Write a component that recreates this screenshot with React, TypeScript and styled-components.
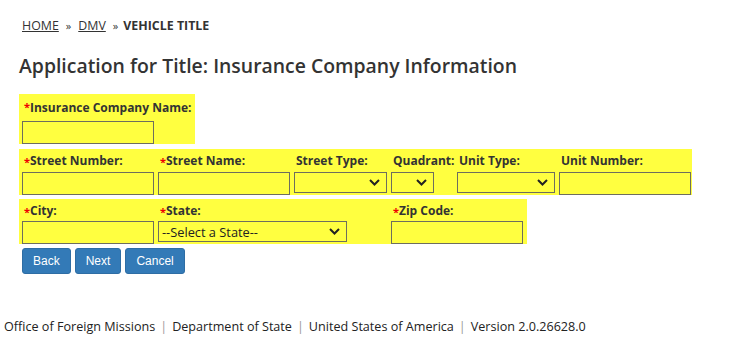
import React from "react";
import styled, { createGlobalStyle } from "styled-components";

const Global = createGlobalStyle`
  html, body { margin: 0; padding: 0; background: #fff; }
  body { font-family: "Open Sans", "DejaVu Sans", sans-serif; color: #333; }
`;

const Page = styled.div`
  width: 735px;
  height: 350px;
  display: flex;
  flex-direction: column;
`;

const Main = styled.div`
  padding: 17px 0 0 19px;
  display: flex;
  flex-direction: column;
  align-items: flex-start;
`;

const Crumbs = styled.div`
  padding-left: 3px;
  font-size: 12.4px;
  line-height: 18px;
  display: flex;
  gap: 7px;
  align-items: baseline;
`;

const CrumbLink = styled.a`
  color: #333;
  text-decoration: underline;
`;

const CrumbSep = styled.span`
  font-size: 11px;
`;

const CrumbCurrent = styled.span`
  font-weight: 700;
  margin-left: -2px;
`;

const Title = styled.h1`
  margin: 18px 0 15px 0;
  font-size: 19.4px;
  line-height: 26px;
  font-weight: 600;
  color: #333;
`;

const Block = styled.div<{ $cols: string; $mt?: number; $pr?: number }>`
  background: #ffff40;
  display: grid;
  grid-template-columns: ${(p) => p.$cols};
  padding: 0 ${(p) => p.$pr ?? 1}px 0 3px;
  margin-top: ${(p) => p.$mt ?? 0}px;
`;

const Field = styled.div<{ $labelH: number }>`
  display: flex;
  flex-direction: column;
  & > label {
    height: ${(p) => p.$labelH}px;
  }
`;

const Label = styled.label`
  display: flex;
  align-items: center;
  padding-left: 2px;
  font-size: 12px;
  font-weight: 700;
  color: #333;
  white-space: nowrap;
`;

const Req = styled.span`
  color: #e00;
  font-size: 11px;
  align-self: flex-start;
  margin-top: 5px;
`;

const TextBox = styled.div<{ $w: number }>`
  width: ${(p) => p.$w}px;
  height: 23px;
  box-sizing: border-box;
  border: 1px solid #6e6e5e;
`;

const SelectBox = styled.div<{ $w: number }>`
  width: ${(p) => p.$w}px;
  height: 21px;
  box-sizing: border-box;
  border: 1px solid #6e6e5e;
  display: flex;
  align-items: center;
  justify-content: space-between;
  padding: 0 6px 0 3px;
  font-size: 12.8px;
  color: #222;
`;

const Chevron = () => (
  <svg width="11" height="7" viewBox="0 0 11 7">
    <path d="M1 1 L5.5 5.5 L10 1" fill="none" stroke="#222" strokeWidth="2" />
  </svg>
);

const Buttons = styled.div`
  display: flex;
  gap: 4px;
  padding-left: 3px;
  margin-top: 4px;
`;

const Button = styled.button`
  height: 26px;
  padding: 0 10px;
  border: 1px solid #2e6da4;
  border-radius: 3px;
  background: #337ab7;
  color: #fff;
  font-family: "Liberation Sans", Arial, sans-serif;
  font-size: 12px;
`;

const Footer = styled.div`
  margin-top: 44px;
  padding-left: 4px;
  font-size: 12.6px;
  color: #222;
  display: flex;
  gap: 5px;
`;

const FootSep = styled.span`
  color: #999;
`;

export default function App() {
  return (
    <Page>
      <Global />
      <Main>
        <Crumbs>
          <CrumbLink>HOME</CrumbLink>
          <CrumbSep>»</CrumbSep>
          <CrumbLink>DMV</CrumbLink>
          <CrumbSep>»</CrumbSep>
          <CrumbCurrent>VEHICLE TITLE</CrumbCurrent>
        </Crumbs>
        <Title>Application for Title: Insurance Company Information</Title>

        <Block $cols="auto" $pr={3}>
          <Field $labelH={27}>
            <Label><Req>*</Req>Insurance Company Name:</Label>
            <TextBox $w={132} />
          </Field>
        </Block>

        <Block $cols="136px 136px 97px 66px 102px 132px" $mt={5}>
          <Field $labelH={23}>
            <Label><Req>*</Req>Street Number:</Label>
            <TextBox $w={132} />
          </Field>
          <Field $labelH={23}>
            <Label><Req>*</Req>Street Name:</Label>
            <TextBox $w={132} />
          </Field>
          <Field $labelH={23}>
            <Label>Street Type:</Label>
            <SelectBox $w={93}><span /><Chevron /></SelectBox>
          </Field>
          <Field $labelH={23}>
            <Label>Quadrant:</Label>
            <SelectBox $w={43}><span /><Chevron /></SelectBox>
          </Field>
          <Field $labelH={23}>
            <Label>Unit Type:</Label>
            <SelectBox $w={98}><span /><Chevron /></SelectBox>
          </Field>
          <Field $labelH={23}>
            <Label>Unit Number:</Label>
            <TextBox $w={132} />
          </Field>
        </Block>

        <Block $cols="136px 233px 135px" $mt={4}>
          <Field $labelH={22}>
            <Label><Req>*</Req>City:</Label>
            <TextBox $w={132} />
          </Field>
          <Field $labelH={22}>
            <Label><Req>*</Req>State:</Label>
            <SelectBox $w={189}><span>--Select a State--</span><Chevron /></SelectBox>
          </Field>
          <Field $labelH={22}>
            <Label><Req>*</Req>Zip Code:</Label>
            <TextBox $w={132} />
          </Field>
        </Block>

        <Buttons>
          <Button>Back</Button>
          <Button>Next</Button>
          <Button>Cancel</Button>
        </Buttons>
      </Main>
      <Footer>
        <span>Office of Foreign Missions</span>
        <FootSep>|</FootSep>
        <span>Department of State</span>
        <FootSep>|</FootSep>
        <span>United States of America</span>
        <FootSep>|</FootSep>
        <span>Version 2.0.26628.0</span>
      </Footer>
    </Page>
  );
}
